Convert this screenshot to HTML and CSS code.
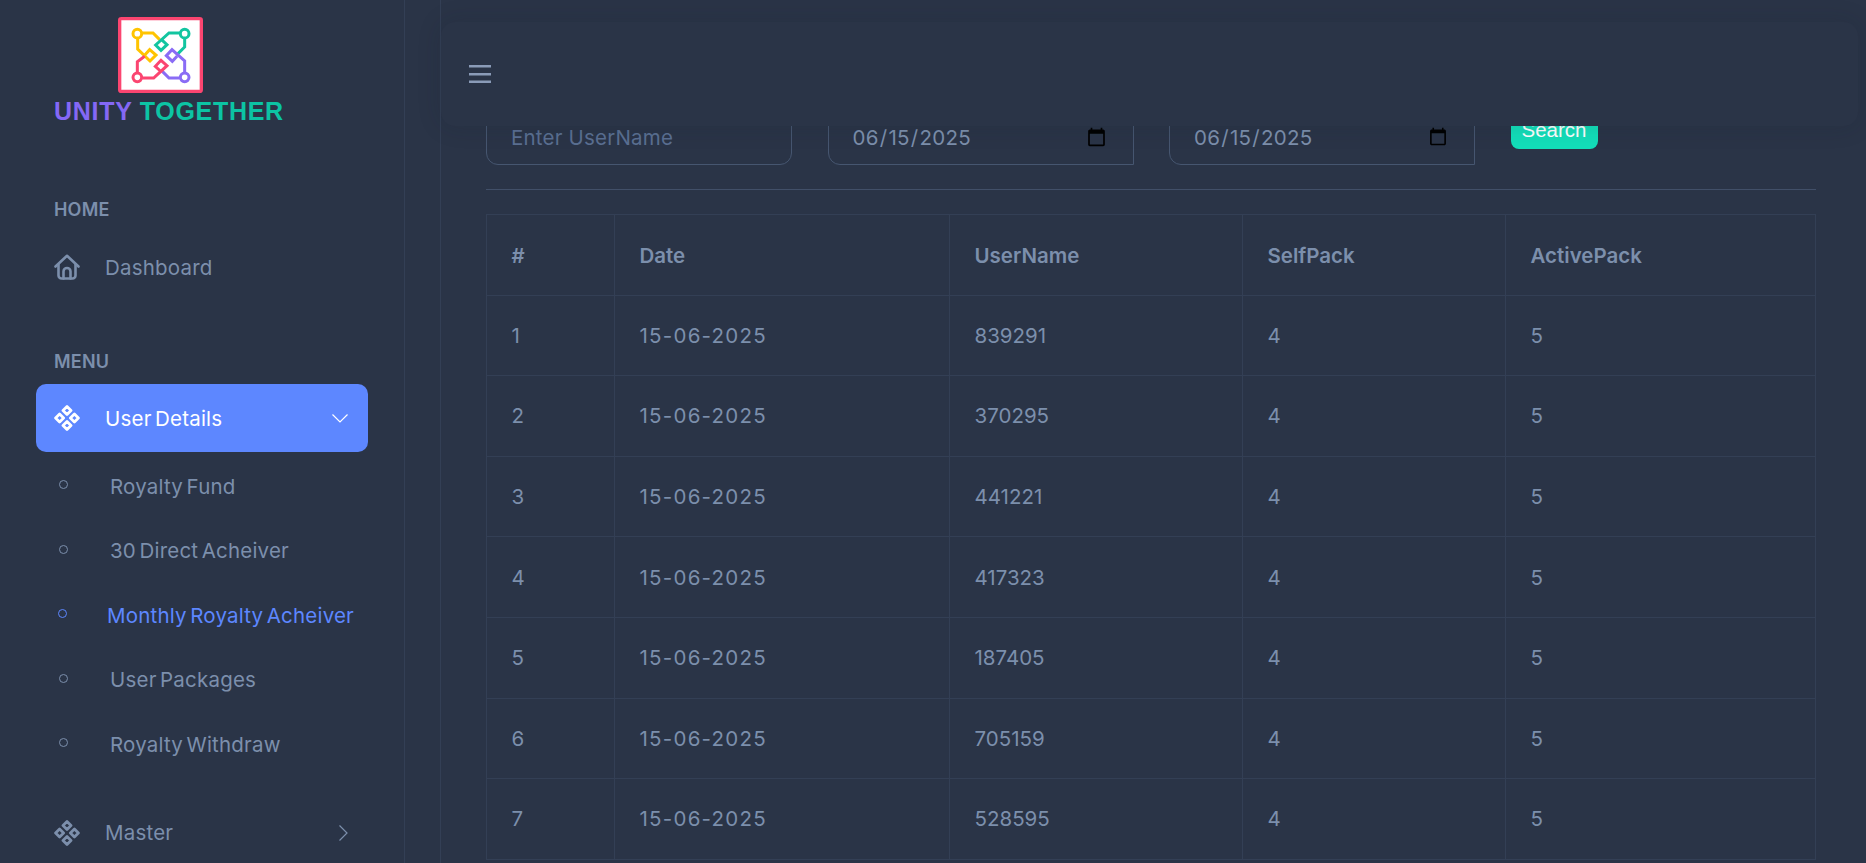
FILE: index.html
```html
<!DOCTYPE html>
<html lang="en">
<head>
    <meta charset="UTF-8">
    <meta name="viewport" content="width=device-width, initial-scale=1.0">
    <title>Monthly Royalty Acheiver</title>
    <link rel="stylesheet" href="styles.css">
</head>
<body>
    <aside class="sidebar">
        <div class="brand">
            <svg class="brand-logo" viewBox="353 52 255 228" fill="none" stroke-width="9" stroke-linejoin="miter">
                <rect x="358" y="57" width="245" height="218" rx="5" fill="#ffffff" stroke="#fb4570" stroke-width="10"/>
                <g stroke="#ffc400">
                    <circle cx="411" cy="102" r="13"/>
                    <path d="M426 100H458L478 120"/>
                    <path d="M412 118V148L449 184L467 166L448 150L434 165"/>
                </g>
                <g stroke="#12c5a0">
                    <circle cx="553" cy="102" r="13"/>
                    <path d="M538 100H506L466 136L482 152L500 135L486 122"/>
                    <path d="M553 118V142L530 165"/>
                </g>
                <g stroke="#8a6cf5">
                    <circle cx="553" cy="233" r="13"/>
                    <path d="M553 218V184L515 150L498 168L516 185L530 170"/>
                    <path d="M538 235H506L486 215"/>
                </g>
                <g stroke="#fb4570">
                    <circle cx="411" cy="233" r="13"/>
                    <path d="M411 218V186L433 170"/>
                    <path d="M426 235H460L500 198L482 182L465 200L480 214"/>
                </g>
            </svg>
            <div class="brand-name"><span class="brand-a">UNITY</span> <span class="brand-b">TOGETHER</span></div>
        </div>

        <div class="nav-label nav-label-home">HOME</div>
        <a class="nav-item">
            <svg class="nav-icon" viewBox="0 0 26 26" fill="none" stroke="currentColor" stroke-width="2.6" stroke-linecap="round" stroke-linejoin="round">
                <path d="M1.5 12.5L13 1.8L24.5 12.5"/>
                <path d="M4.5 10.5V21.5A3 3 0 0 0 7.5 24.5H18.5A3 3 0 0 0 21.5 21.5V10.5"/>
                <path d="M9.5 24.5V17.5A3.5 3.5 0 0 1 16.5 17.5V24.5"/>
            </svg>
            <span>Dashboard</span>
        </a>

        <div class="nav-label nav-label-menu">MENU</div>
        <a class="nav-item nav-item-active">
            <svg class="nav-icon" viewBox="0 0 26 26" fill="none" stroke="currentColor" stroke-width="2.8" stroke-linejoin="round">
                <path d="M13 1.6L17 5.6L13 9.6L9 5.6Z"/>
                <path d="M5.6 9L9.6 13L5.6 17L1.6 13Z"/>
                <path d="M20.4 9L24.4 13L20.4 17L16.4 13Z"/>
                <path d="M13 16.4L17 20.4L13 24.4L9 20.4Z"/>
            </svg>
            <span>User Details</span>
            <svg class="nav-chevron" viewBox="0 0 16 9" fill="none" stroke="currentColor" stroke-width="1.2"><path d="M0.5 0.5L8 8L15.5 0.5"/></svg>
        </a>
        <ul class="sub-menu">
            <li class="sub-item"><i class="sub-dot"></i>Royalty Fund</li>
            <li class="sub-item"><i class="sub-dot"></i>30 Direct Acheiver</li>
            <li class="sub-item sub-item-active"><i class="sub-dot"></i>Monthly Royalty Acheiver</li>
            <li class="sub-item"><i class="sub-dot"></i>User Packages</li>
            <li class="sub-item"><i class="sub-dot"></i>Royalty Withdraw</li>
        </ul>
        <a class="nav-item nav-item-master">
            <svg class="nav-icon" viewBox="0 0 26 26" fill="none" stroke="currentColor" stroke-width="2.8" stroke-linejoin="round">
                <path d="M13 1.6L17 5.6L13 9.6L9 5.6Z"/>
                <path d="M5.6 9L9.6 13L5.6 17L1.6 13Z"/>
                <path d="M20.4 9L24.4 13L20.4 17L16.4 13Z"/>
                <path d="M13 16.4L17 20.4L13 24.4L9 20.4Z"/>
            </svg>
            <span>Master</span>
            <svg class="nav-chevron-right" viewBox="0 0 9 16" fill="none" stroke="currentColor" stroke-width="1.2"><path d="M0.5 0.5L8 8L0.5 15.5"/></svg>
        </a>
    </aside>

    <main class="main">
        <header class="topbar">
            <svg class="menu-toggle" viewBox="0 0 22 18" fill="none" stroke="currentColor" stroke-width="2.6"><path d="M0 1.3H22M0 9.3H22M0 16.7H22"/></svg>
        </header>
        <div class="content">
            <form class="filters">
                <input class="field field-text" type="text" placeholder="Enter UserName">
                <input class="field field-date" type="date" value="2025-06-15">
                <input class="field field-date" type="date" value="2025-06-15">
                <button class="search-btn" type="button">Search</button>
            </form>
            <hr class="divider">
            <table class="data-table">
                <colgroup>
                    <col class="col-1"><col class="col-2"><col class="col-3"><col class="col-4"><col>
                </colgroup>
                <thead>
                    <tr><th>#</th><th>Date</th><th>UserName</th><th>SelfPack</th><th>ActivePack</th></tr>
                </thead>
                <tbody>
                    <tr><td>1</td><td class="cell-date">15-06-2025</td><td>839291</td><td>4</td><td>5</td></tr>
                    <tr><td>2</td><td class="cell-date">15-06-2025</td><td>370295</td><td>4</td><td>5</td></tr>
                    <tr><td>3</td><td class="cell-date">15-06-2025</td><td>441221</td><td>4</td><td>5</td></tr>
                    <tr><td>4</td><td class="cell-date">15-06-2025</td><td>417323</td><td>4</td><td>5</td></tr>
                    <tr><td>5</td><td class="cell-date">15-06-2025</td><td>187405</td><td>4</td><td>5</td></tr>
                    <tr><td>6</td><td class="cell-date">15-06-2025</td><td>705159</td><td>4</td><td>5</td></tr>
                    <tr><td>7</td><td class="cell-date">15-06-2025</td><td>528595</td><td>4</td><td>5</td></tr>
                </tbody>
            </table>
        </div>
    </main>
</body>
</html>
```

FILE: styles.css
```css
html, body {
    height: 100%;
}
body {
    margin: 0;
    display: flex;
    height: 100vh;
    overflow: hidden;
    font-family: Inter, "Noto Sans", sans-serif;
    font-size: 20.5px;
    color: #7c8fac;
    background-color: #2a3447;
}

/* sidebar */
.sidebar {
    width: 332px;
    flex: none;
    padding: 17px 36px 0;
    border-right: 1px solid #333f55;
}
.brand {
    padding-left: 18px;
}
.brand-logo {
    display: block;
    width: 85px;
    height: 76px;
    margin-left: 64px;
}
.brand-name {
    margin-top: 6px;
    font-family: "Liberation Sans", Arial, sans-serif;
    font-size: 25px;
    font-weight: 700;
    line-height: 24px;
    letter-spacing: 0.7px;
    white-space: nowrap;
}
.brand-a {
    color: #8468f5;
}
.brand-b {
    color: #0cc4a4;
}
.nav-label {
    padding-left: 18px;
    font-size: 18px;
    font-weight: 600;
    line-height: 30px;
    letter-spacing: 0.2px;
}
.nav-label-home {
    margin-top: 72px;
}
.nav-label-menu {
    margin-top: 46px;
}
.nav-item {
    display: flex;
    align-items: center;
    height: 68px;
    padding: 0 20px 0 18px;
    border-radius: 10px;
    letter-spacing: 0.2px;
    word-spacing: -0.12em;
}
.nav-label-home + .nav-item {
    margin-top: 8px;
}
.nav-label-menu + .nav-item {
    margin-top: 7px;
}
.nav-icon {
    width: 26px;
    height: 26px;
    margin-right: 25px;
    flex: none;
}
.nav-item-active {
    background-color: #5d87ff;
    color: #ffffff;
}
.nav-chevron {
    width: 16px;
    height: 9px;
    margin-left: auto;
}
.nav-chevron-right {
    width: 9px;
    height: 16px;
    margin-left: auto;
}
.nav-item-master {
    margin-top: 22px;
    padding-right: 20px;
}
.sub-menu {
    list-style: none;
    margin: 2px 0 0;
    padding: 0;
}
.sub-item {
    display: flex;
    align-items: center;
    height: 64.5px;
    padding-left: 23px;
    letter-spacing: 0.2px;
    word-spacing: -0.12em;
    white-space: nowrap;
}
.sub-dot {
    width: 9px;
    height: 9px;
    margin: -3px 42px 0 0;
    border: 1.3px solid currentColor;
    border-radius: 50%;
    box-sizing: border-box;
    flex: none;
}
.sub-item-active {
    padding-left: 22px;
    color: #5d87ff;
}
.sub-item-active .sub-dot {
    margin-right: 40px;
}

/* main */
.main {
    flex: 1;
    min-width: 0;
    margin-left: 35px;
    border-left: 1px solid #333f55;
}
.topbar {
    position: relative;
    z-index: 2;
    display: flex;
    align-items: center;
    height: 104px;
    margin: 22px 8px 0 0;
    padding-left: 28px;
    border-radius: 14px;
    background-color: #2a3447;
    box-shadow: 0 0 24px rgba(20, 28, 45, 0.16);
}
.menu-toggle {
    width: 22px;
    height: 18px;
    color: #8a9bb8;
}
.content {
    padding: 0 50px 0 45px;
    margin-top: -15px;
}
.filters {
    display: flex;
    align-items: flex-start;
    gap: 35.5px;
}
.field {
    width: 306px;
    height: 54px;
    flex: none;
    box-sizing: border-box;
    padding: 0 24px 2px;
    border: 1px solid #465670;
    border-radius: 12px;
    background: transparent;
    font-family: inherit;
    font-size: 20.5px;
    letter-spacing: 0.2px;
    color: #7c8fac;
    outline: none;
}
.field::placeholder {
    color: #5a6f92;
}
.field-date {
    padding-left: 23px;
    letter-spacing: 0.3px;
    border-radius: 12px 0 0 12px;
}
.search-btn {
    width: 87px;
    height: 38px;
    padding: 0 0 1px;
    border: 0;
    border-radius: 8px;
    background-color: #13deb9;
    font-family: "Liberation Sans", Arial, sans-serif;
    font-size: 20.5px;
    color: #ffffff;
}
.divider {
    height: 1px;
    margin: 24px 0 24px;
    border: 0;
    background-color: #414f68;
}
.data-table {
    width: 100%;
    table-layout: fixed;
    border-collapse: collapse;
}
.col-1 {
    width: 128px;
}
.col-2 {
    width: 335px;
}
.col-3 {
    width: 293px;
}
.col-4 {
    width: 263px;
}
.data-table th, .data-table td {
    height: 80.6px;
    box-sizing: border-box;
    padding: 0 24.5px;
    border: 1px solid #333f55;
    text-align: left;
}
.data-table th {
    padding-top: 1px;
    font-weight: 600;
}
.data-table .cell-date {
    letter-spacing: 1.25px;
}
```
